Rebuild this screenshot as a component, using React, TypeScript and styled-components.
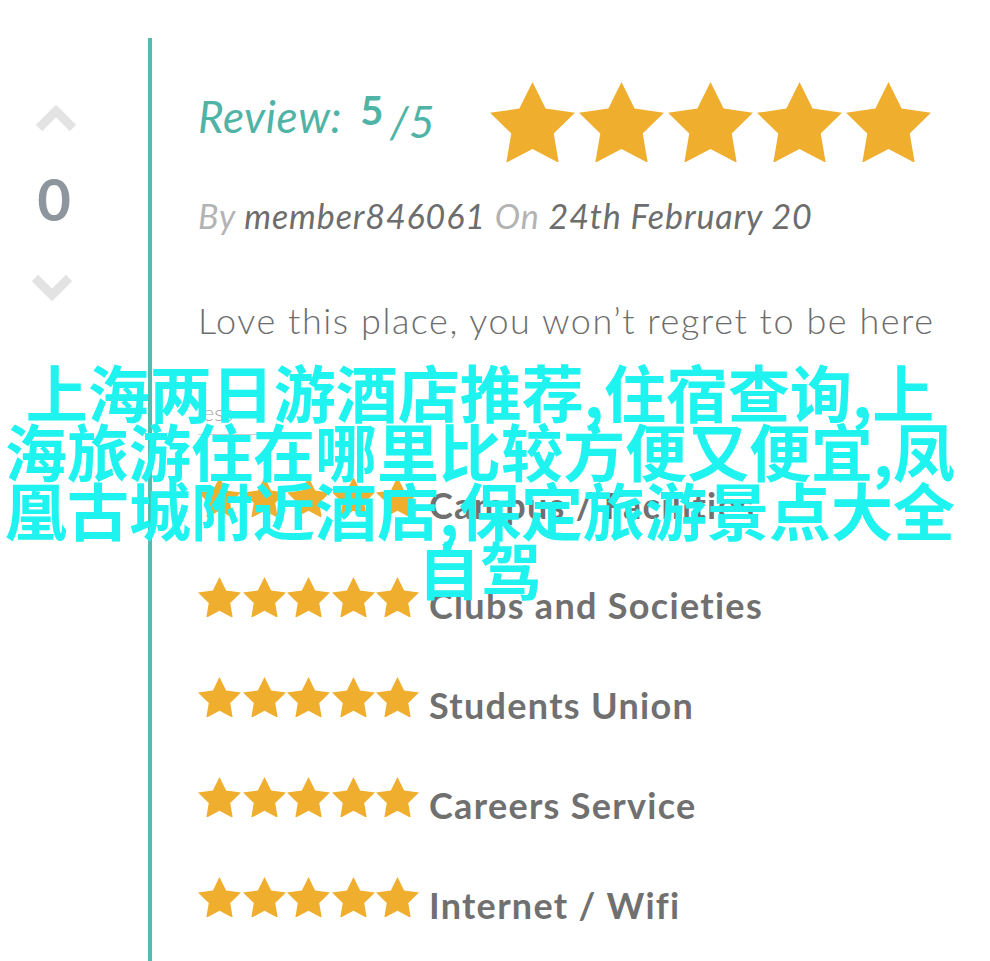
import React, { FC } from 'react';
import styled, { createGlobalStyle } from 'styled-components';

const Colors = {
    teal: '#4fb3a6',
    tealLine: '#55bbae',
    star: '#f0ae2f',
    text: '#6d6d6d',
    light: '#b3b3b3',
    vote: '#8e959d',
    chevron: '#e3e3e3',
    overlay: '#1ff3f0',
};

const GlobalStyle = createGlobalStyle`
    html, body {
        margin: 0;
        padding: 0;
        background: #ffffff;
    }
    body {
        font-family: Lato, 'Noto Sans', sans-serif;
        overflow: hidden;
    }
`;

const Page = styled.div`
    position: relative;
    display: flex;
    flex-direction: row;
    width: 990px;
    height: 961px;
    overflow: hidden;
`;

const VoteColumn = styled.div`
    width: 108px;
    margin-right: 40px;
    display: flex;
    flex-direction: column;
    align-items: center;
    padding-top: 104px;
`;

const Chevron = styled.svg<{ $shift: number }>`
    display: block;
    width: 42px;
    height: 28px;
    transform: translateX(${(p) => p.$shift}px);
`;

const VoteCount = styled.div`
    font-family: Lato, sans-serif;
    font-weight: 700;
    font-size: 58px;
    line-height: 58px;
    color: ${Colors.vote};
    margin: 38px 0 46px;
`;

const Main = styled.div`
    flex: 1;
    margin-top: 38px;
    border-left: 4px solid ${Colors.tealLine};
    padding: 43px 0 0 46px;
    display: flex;
    flex-direction: column;
`;

const ReviewRow = styled.div`
    display: flex;
    flex-direction: row;
    align-items: center;
    height: 82px;
`;

const ReviewLabel = styled.div`
    font-style: italic;
    font-size: 44px;
    color: ${Colors.teal};
    width: 292px;
    white-space: nowrap;
    letter-spacing: 0.6px;
    margin-top: -12px;
`;

const ScoreNum = styled.span`
    font-style: normal;
    font-weight: 700;
    font-size: 40px;
    position: relative;
    top: -8px;
    margin-left: 18px;
`;

const ScoreDen = styled.span`
    font-size: 44px;
    position: relative;
    top: 5px;
    margin-left: 6px;
`;

const StarRow = styled.div<{ $gap: number }>`
    display: flex;
    flex-direction: row;
    gap: ${(p) => p.$gap}px;
`;

const StarSvg = styled.svg<{ $size: number }>`
    display: block;
    width: ${(p) => p.$size}px;
    height: ${(p) => p.$size * 0.95}px;
    fill: ${Colors.star};
`;

const Byline = styled.div`
    margin-top: 32px;
    font-style: italic;
    font-size: 34px;
    color: ${Colors.text};
    white-space: nowrap;
    letter-spacing: 0.9px;
`;

const Muted = styled.span`
    color: ${Colors.light};
`;

const Body = styled.p`
    margin: 62px 0 0;
    font-weight: 300;
    font-size: 36px;
    color: ${Colors.text};
    white-space: nowrap;
    letter-spacing: 1.55px;
`;

const LessLink = styled.div`
    margin-top: 58px;
    width: 64px;
    font-weight: 300;
    font-size: 22px;
    line-height: 26px;
    color: #a4a4a4;
    padding-bottom: 8px;
    border-bottom: 1px solid #cccccc;
`;

const Ratings = styled.div`
    margin-top: 12px;
    display: flex;
    flex-direction: column;
`;

const RatingRow = styled.div`
    display: flex;
    flex-direction: row;
    align-items: center;
    height: 100px;
    gap: 10px;
`;

const RatingLabel = styled.span`
    font-weight: 700;
    font-size: 36px;
    color: #707070;
    white-space: nowrap;
    letter-spacing: 1.3px;
    position: relative;
    top: 8px;
`;

const Overlay = styled.div`
    position: absolute;
    left: 2px;
    top: 362px;
    width: 956px;
    text-align: center;
    font-family: 'Noto Sans CJK SC', 'Noto Sans', sans-serif;
    font-weight: 700;
    font-size: 62px;
    line-height: 59px;
    color: ${Colors.overlay};
    pointer-events: none;
`;

const Star: FC<{ size: number }> = ({ size }) => (
    <StarSvg $size={size} viewBox="2 2 20 19.02">
        <polygon points="12,2 15.09,8.26 22,9.27 17,14.14 18.18,21.02 12,17.77 5.82,21.02 7,14.14 2,9.27 8.91,8.26" />
    </StarSvg>
);

const Stars: FC<{ size: number; gap: number }> = ({ size, gap }) => (
    <StarRow $gap={gap}>
        {[0, 1, 2, 3, 4].map((i) => (
            <Star key={i} size={size} />
        ))}
    </StarRow>
);

const categories = ['Campus / Facilities', 'Clubs and Societies', 'Students Union', 'Careers Service', 'Internet / Wifi'];

const App: FC = () => (
    <>
        <GlobalStyle />
        <Page>
            <VoteColumn>
                <Chevron $shift={2} viewBox="0 0 42 28">
                    <polyline points="4,24 21,7 38,24" fill="none" stroke={Colors.chevron} strokeWidth="9" />
                </Chevron>
                <VoteCount>0</VoteCount>
                <Chevron $shift={-2} viewBox="0 0 42 28">
                    <polyline points="4,4 21,21 38,4" fill="none" stroke={Colors.chevron} strokeWidth="9" />
                </Chevron>
            </VoteColumn>
            <Main>
                <ReviewRow>
                    <ReviewLabel>
                        Review:
                        <ScoreNum>5</ScoreNum>
                        <ScoreDen>/5</ScoreDen>
                    </ReviewLabel>
                    <Stars size={85} gap={4} />
                </ReviewRow>
                <Byline>
                    <Muted>By</Muted> member846061 <Muted>On</Muted> 24th February 20
                </Byline>
                <Body>Love this place, you won’t regret to be here</Body>
                <LessLink>less</LessLink>
                <Ratings>
                    {categories.map((c) => (
                        <RatingRow key={c}>
                            <Stars size={43} gap={1.5} />
                            <RatingLabel>{c}</RatingLabel>
                        </RatingRow>
                    ))}
                </Ratings>
            </Main>
            <Overlay>上海两日游酒店推荐,住宿查询,上海旅游住在哪里比较方便又便宜,凤凰古城附近酒店,保定旅游景点大全自驾</Overlay>
        </Page>
    </>
);

export default App;
